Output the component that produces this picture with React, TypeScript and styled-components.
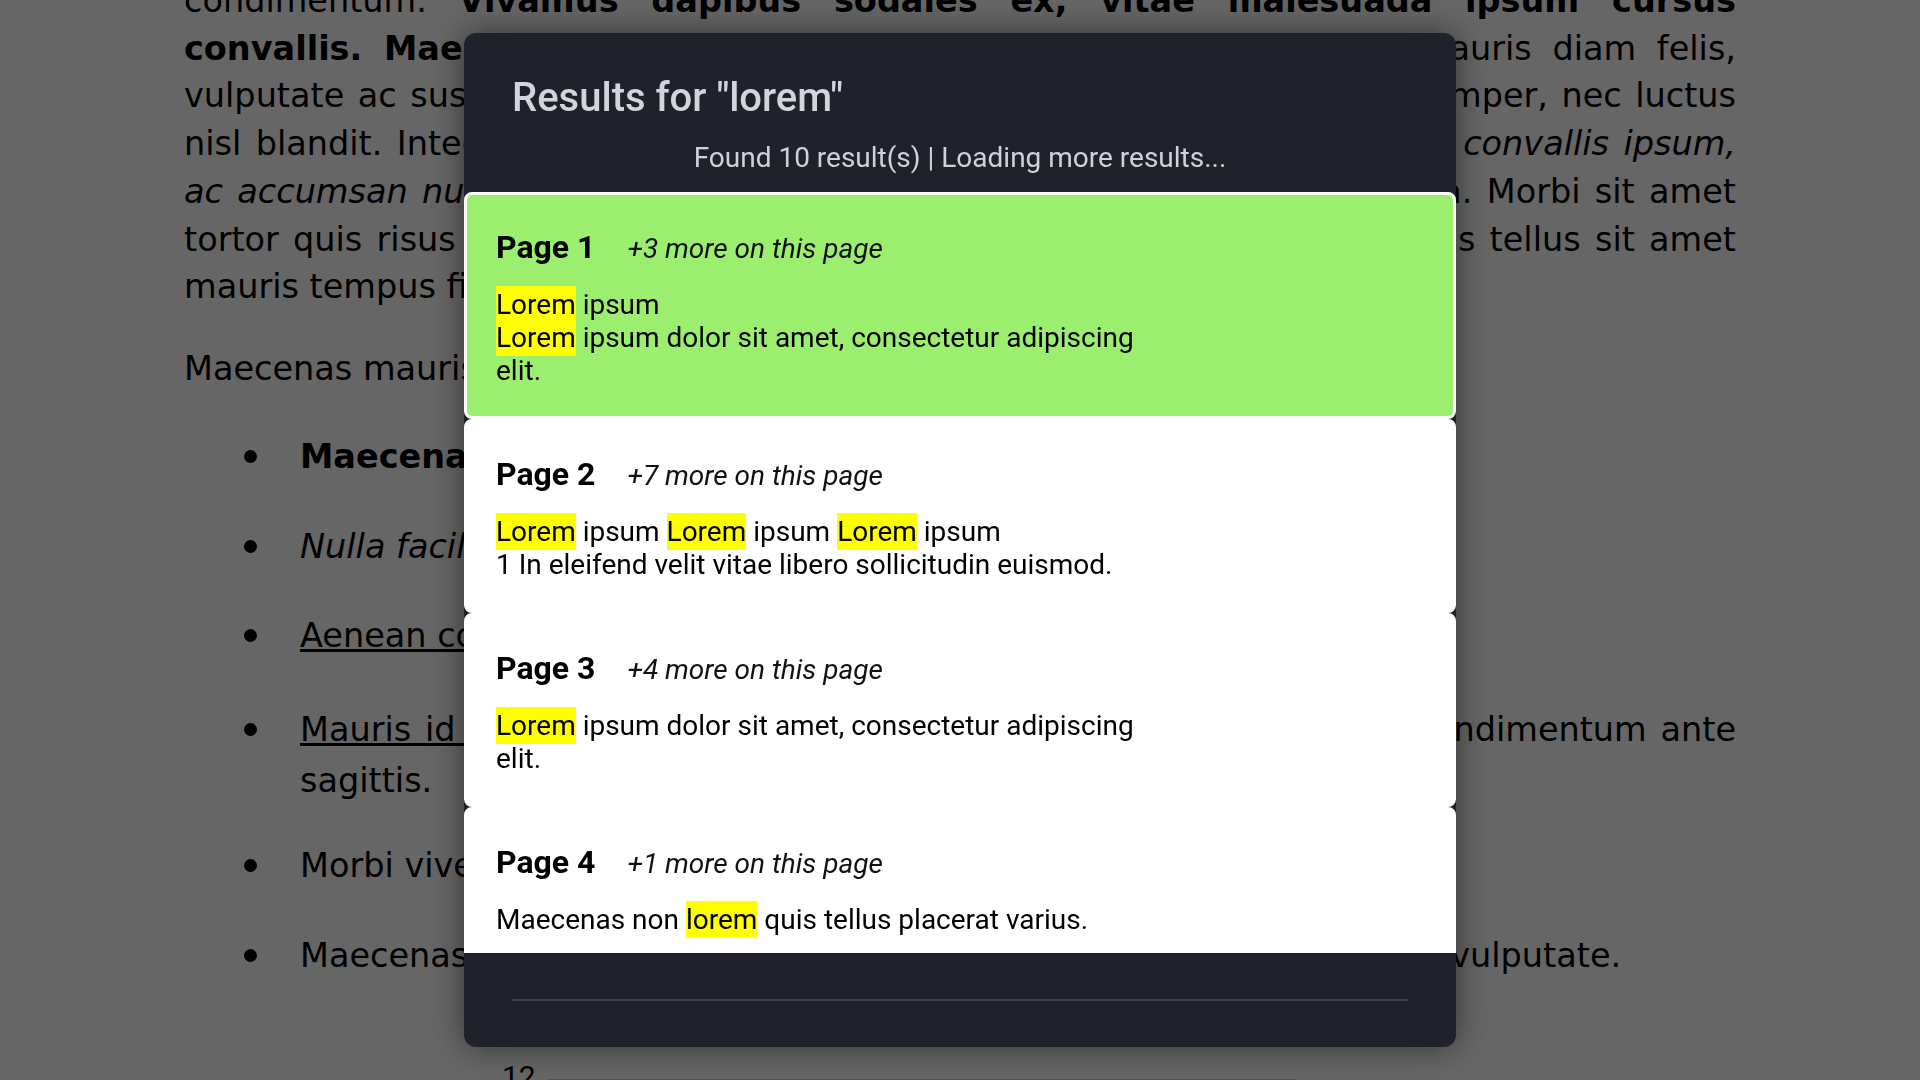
import React from 'react'
import styled, { createGlobalStyle } from 'styled-components'

interface SearchResult {
  page: number;
  more: number;
  excerpts: string[];
}

const QUERY = 'lorem'

const results: SearchResult[] = [
  {
    page: 1,
    more: 3,
    excerpts: ['Lorem ipsum', 'Lorem ipsum dolor sit amet, consectetur adipiscing elit.']
  },
  {
    page: 2,
    more: 7,
    excerpts: ['Lorem ipsum Lorem ipsum Lorem ipsum', '1 In eleifend velit vitae libero sollicitudin euismod.']
  },
  {
    page: 3,
    more: 4,
    excerpts: ['Lorem ipsum dolor sit amet, consectetur adipiscing elit.']
  },
  {
    page: 4,
    more: 1,
    excerpts: ['Maecenas non lorem quis tellus placerat varius.']
  },
  {
    page: 5,
    more: 2,
    excerpts: ['Lorem ipsum dolor sit amet.']
  }
]

const GlobalStyle = createGlobalStyle`
  * {
    box-sizing: border-box;
  }

  html, body {
    margin: 0;
    height: 100%;
    overflow: hidden;
    background: #fff;
  }
`

/* the document behind the dialog */

const Document = styled.article`
  max-width: 1552px;
  margin: -71px auto 0;
  font-family: "DejaVu Sans", "Liberation Sans", sans-serif;
  font-size: 33.5px;
  line-height: 47.75px;
  color: #000;
`

const Paragraph = styled.p`
  margin: 0 0 34px;
`

const Line = styled.span<{ $last?: boolean }>`
  display: block;
  text-align: ${({ $last }) => ($last ? 'left' : 'justify')};
  text-align-last: ${({ $last }) => ($last ? 'auto' : 'justify')};
`

const BulletList = styled.ul`
  list-style: none;
  margin: 40px 0;
  padding: 0 0 0 40px;
`

const Bullet = styled.li<{ $loose?: boolean }>`
  display: grid;
  grid-template-columns: 52px 1fr;
  column-gap: 24px;
  margin: 0 0 ${({ $loose }) => ($loose ? '36px' : '42px')};
  padding-top: ${({ $loose }) => ($loose ? '2px' : '0')};
  line-height: ${({ $loose }) => ($loose ? '51px' : 'inherit')};

  &::before {
    content: '';
    justify-self: center;
    width: 13px;
    height: 13px;
    margin-top: ${({ $loose }) => ($loose ? '19px' : '17px')};
    border-radius: 50%;
    background: #000;
  }
`

const FigureRow = styled.div`
  display: flex;
  align-items: flex-start;
  gap: 11px;
  margin-top: 79px;
  padding-left: 318px;
`

const FigureLabel = styled.span`
  font-family: Roboto, sans-serif;
  font-size: 30px;
  line-height: 36px;
`

const FigureBox = styled.div`
  width: 751px;
  height: 80px;
  margin-top: 20px;
  border: 2px solid #c4c4c4;
  border-radius: 4px;
`

/* the search dialog */

const Overlay = styled.div`
  position: fixed;
  inset: 0;
  display: flex;
  align-items: center;
  justify-content: center;
  background: rgba(0, 0, 0, 0.6);
`

const Dialog = styled.section`
  display: flex;
  flex-direction: column;
  width: 992px;
  height: calc(100vh - 66px);
  overflow: hidden;
  border-radius: 12px;
  background: #1f222b;
  box-shadow: 0 0 34px rgba(0, 0, 0, 0.5);
  font-family: Roboto, "Noto Sans", sans-serif;
`

const DialogHeader = styled.header`
  padding: 41px 48px 18px;
`

const Title = styled.h2`
  margin: 0;
  font-size: 40px;
  line-height: 48px;
  font-weight: 500;
  color: #d3d5da;
`

const Status = styled.p`
  margin: 19px 0 0;
  font-size: 28px;
  line-height: 33px;
  text-align: center;
  color: #cfd2d7;
`

const ResultList = styled.ul`
  flex: 1;
  min-height: 0;
  margin: 0;
  padding: 0;
  list-style: none;
  overflow-y: auto;
  scrollbar-width: none;
`

const ResultCard = styled.li<{ $selected: boolean }>`
  padding: 34px 29px 29px;
  border: 3px solid #fff;
  border-radius: 8px;
  background: ${({ $selected }) => ($selected ? '#9cee6e' : '#fff')};
  color: #000;
`

const CardHeader = styled.div`
  display: flex;
  align-items: baseline;
  gap: 32px;
  margin-bottom: 22px;
`

const PageLabel = styled.span`
  font-size: 32px;
  line-height: 37px;
  font-weight: 700;
`

const MoreLabel = styled.span`
  font-size: 28px;
  font-style: italic;
  color: #111;
`

const Excerpts = styled.div`
  max-width: 660px;
  font-size: 28px;
  line-height: 33px;
`

const Mark = styled.mark`
  padding: 2px 0;
  background: #ffff00;
  color: inherit;
`

const DialogFooter = styled.footer`
  padding: 46px 48px;
`

const Divider = styled.div`
  height: 2px;
  background: #3c404a;
`

const highlight = (text: string, term: string) =>
  text.split(new RegExp(`(${term})`, 'gi')).map((part, i) =>
    part.toLowerCase() === term ? <Mark key={i}>{part}</Mark> : <React.Fragment key={i}>{part}</React.Fragment>
  )

const BackgroundDocument = () => (
  <Document>
    <Paragraph>
      <Line>Lorem ipsum dolor sit amet, consectetur adipiscing elit. Fusce pulvinar nec nisl quis</Line>
      <Line>condimentum. <b>Vivamus dapibus sodales ex, vitae malesuada ipsum cursus</b></Line>
      <Line><b>convallis. Maecenas at orci</b> eget lorem feugiat sed ut id et dui. Mauris diam felis,</Line>
      <Line>vulputate ac suscipit et, pretium vitae ante. Nam quis erat ut velit nisl semper, nec luctus</Line>
      <Line>nisl blandit. Integer ut risus eu justo vitae tincidunt lectus rutrum. Donec <i>convallis ipsum,</i></Line>
      <Line><i>ac accumsan nunc porta.</i> Sed vitae lacus at quam eget massa leo viverra. Morbi sit amet</Line>
      <Line>tortor quis risus finibus, et gravida urna magna vitae ultricies. Integer quis tellus sit amet</Line>
      <Line $last>mauris tempus finibus in eget elit.</Line>
    </Paragraph>
    <Paragraph>Maecenas mauris magna, tempus sed arcu in, varius dictum est.</Paragraph>
    <BulletList>
      <Bullet><span><b>Maecenas nec sem</b> ut nibh placerat auctor.</span></Bullet>
      <Bullet><span><i>Nulla facilisi.</i> Integer non lacus vitae quam congue.</span></Bullet>
      <Bullet><span><u>Aenean commodo</u> purus eu dolor vestibulum.</span></Bullet>
      <Bullet $loose>
        <span>
          <Line><u>Mauris id nunc velit</u> eu augue finibus lacus accumsan. Donec ut condimentum ante</Line>
          <Line $last>sagittis.</Line>
        </span>
      </Bullet>
      <Bullet><span>Morbi viverra dui ac mi luctus, et tempor nisl.</span></Bullet>
      <Bullet><span>Maecenas aliquet orci vel ex pretium, et facilisis nisl, pulvinar quam vulputate.</span></Bullet>
    </BulletList>
    <FigureRow>
      <FigureLabel>12</FigureLabel>
      <FigureBox />
    </FigureRow>
  </Document>
)

const SearchDialog = () => (
  <Overlay>
    <Dialog>
      <DialogHeader>
        <Title>Results for "{QUERY}"</Title>
        <Status>Found 10 result(s) | Loading more results...</Status>
      </DialogHeader>
      <ResultList>
        {results.map((result, index) => (
          <ResultCard key={result.page} $selected={index === 0}>
            <CardHeader>
              <PageLabel>Page {result.page}</PageLabel>
              <MoreLabel>+{result.more} more on this page</MoreLabel>
            </CardHeader>
            <Excerpts>
              {result.excerpts.map(excerpt => (
                <div key={excerpt}>{highlight(excerpt, QUERY)}</div>
              ))}
            </Excerpts>
          </ResultCard>
        ))}
      </ResultList>
      <DialogFooter>
        <Divider />
      </DialogFooter>
    </Dialog>
  </Overlay>
)

const App = () => (
  <>
    <GlobalStyle />
    <BackgroundDocument />
    <SearchDialog />
  </>
)

export default App
